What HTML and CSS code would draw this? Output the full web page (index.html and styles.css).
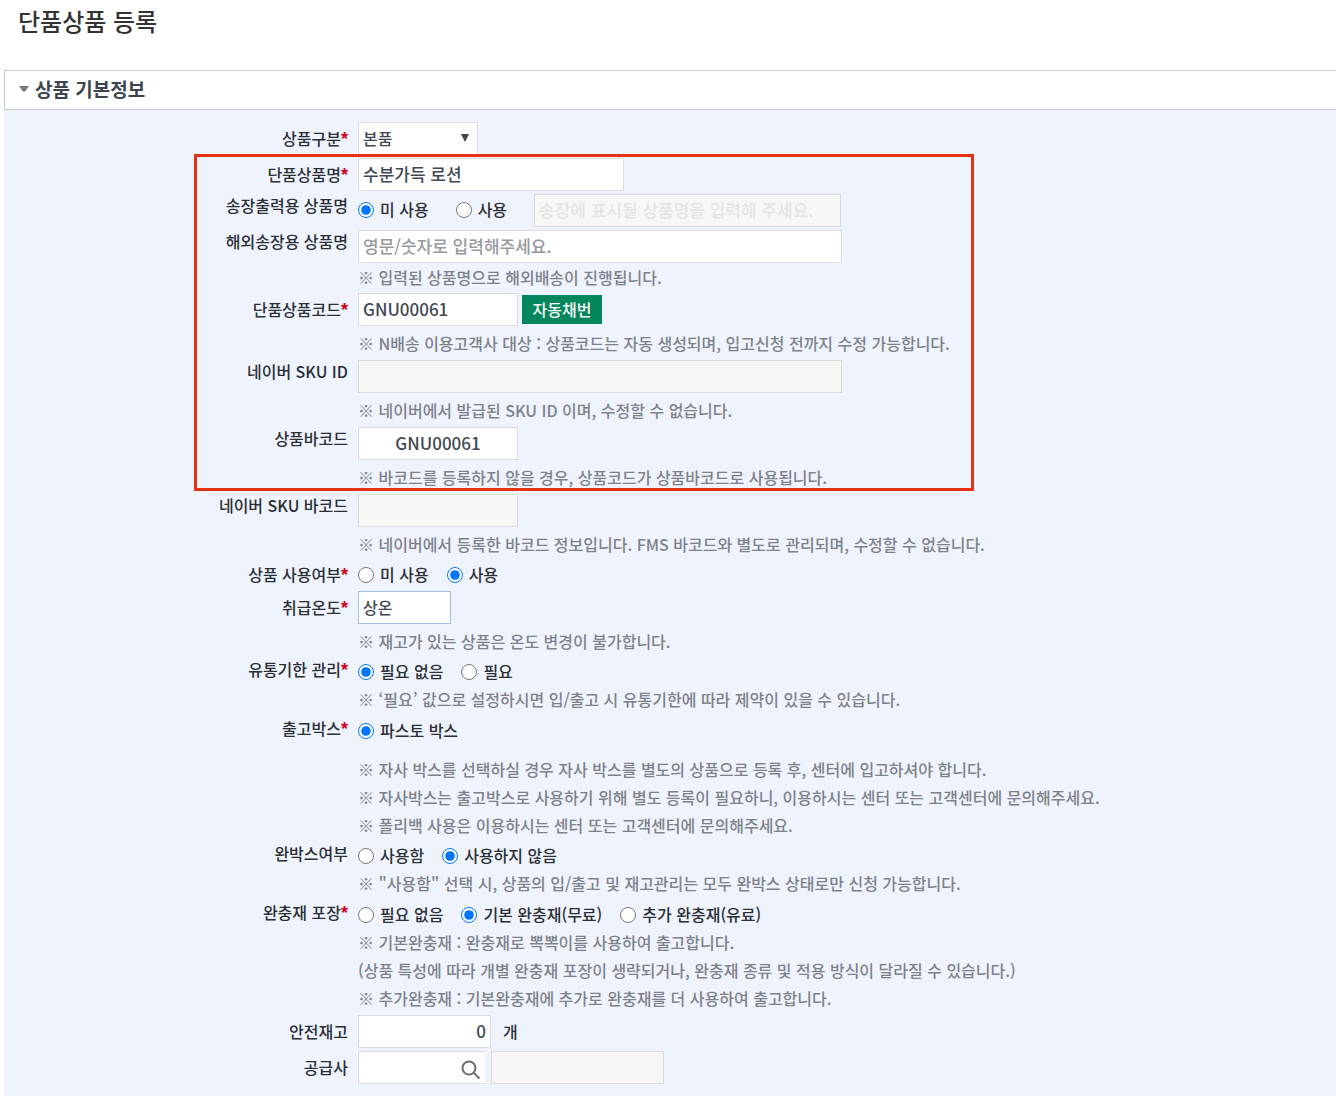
FILE: index.html
```html
<!DOCTYPE html>
<html lang="ko">
<head>
<meta charset="utf-8">
<meta name="viewport" content="width=device-width, initial-scale=1">
<title>단품상품 등록</title>
<link rel="stylesheet" href="styles.css">
</head>
<body>
<h1 class="page-title">단품상품 등록</h1>
<section class="section">
  <h2 class="section-title">
    <svg class="caret" width="10" height="6" viewBox="0 0 10 6" aria-hidden="true"><path d="M0 0H10L6 5.5H4Z"/></svg>
    상품 기본정보
  </h2>
  <form class="panel">
    <div class="row">
      <label class="label label-mid" for="kind">상품구분<span class="req">*</span></label>
      <div class="controls">
        <div class="select-wrap">
          <select class="field w-kind" id="kind"><option>본품</option></select>
          <svg class="arrow" width="8" height="8" viewBox="0 0 8 8" aria-hidden="true"><path d="M0 0H8L4 8Z"/></svg>
        </div>
      </div>
    </div>

    <div class="highlight">
      <div class="row">
        <label class="label label-mid" for="name">단품상품명<span class="req">*</span></label>
        <div class="controls"><input class="field w-name" id="name" type="text" value="수분가득 로션"></div>
      </div>
      <div class="row" role="radiogroup" aria-labelledby="l-invoice">
        <span class="label" id="l-invoice">송장출력용 상품명</span>
        <div class="controls spaced">
          <label class="radio"><input type="radio" name="invoice" checked>미 사용</label>
          <label class="radio"><input type="radio" name="invoice">사용</label>
          <input class="field w-invoice" type="text" aria-label="송장 상품명" placeholder="송장에 표시될 상품명을 입력해 주세요." disabled>
        </div>
      </div>
      <div class="row row-tight">
        <label class="label" for="global">해외송장용 상품명</label>
        <div>
          <div class="controls"><input class="field w-wide" id="global" type="text" placeholder="영문/숫자로 입력해주세요."></div>
          <p class="note">※ 입력된 상품명으로 해외배송이 진행됩니다.</p>
        </div>
      </div>
      <div class="row">
        <label class="label label-mid" for="code">단품상품코드<span class="req">*</span></label>
        <div>
          <div class="controls lead">
            <input class="field w-code" id="code" type="text" value="GNU00061">
            <button class="auto" type="button">자동채번</button>
          </div>
          <p class="note">※ N배송 이용고객사 대상 : 상품코드는 자동 생성되며, 입고신청 전까지 수정 가능합니다.</p>
        </div>
      </div>
      <div class="row">
        <label class="label" for="sku">네이버 SKU ID</label>
        <div>
          <div class="controls lead"><input class="field w-wide" id="sku" type="text" disabled></div>
          <p class="note">※ 네이버에서 발급된 SKU ID 이며, 수정할 수 없습니다.</p>
        </div>
      </div>
      <div class="row">
        <label class="label" for="barcode">상품바코드</label>
        <div>
          <div class="controls lead"><input class="field w-code center" id="barcode" type="text" value="GNU00061"></div>
          <p class="note">※ 바코드를 등록하지 않을 경우, 상품코드가 상품바코드로 사용됩니다.</p>
        </div>
      </div>
    </div>

    <div class="row">
      <label class="label" for="skubar">네이버 SKU 바코드</label>
      <div>
        <div class="controls lead"><input class="field w-code" id="skubar" type="text" disabled></div>
        <p class="note">※ 네이버에서 등록한 바코드 정보입니다. FMS 바코드와 별도로 관리되며, 수정할 수 없습니다.</p>
      </div>
    </div>
    <div class="row" role="radiogroup" aria-labelledby="l-use">
      <span class="label label-line" id="l-use">상품 사용여부<span class="req">*</span></span>
      <div class="options">
        <label class="radio"><input type="radio" name="use">미 사용</label>
        <label class="radio"><input type="radio" name="use" checked>사용</label>
      </div>
    </div>
    <div class="row">
      <label class="label label-mid" for="temp">취급온도<span class="req">*</span></label>
      <div>
        <div class="controls lead"><select class="field w-temp" id="temp"><option>상온</option></select></div>
        <p class="note">※ 재고가 있는 상품은 온도 변경이 불가합니다.</p>
      </div>
    </div>
    <div class="row row-loose" role="radiogroup" aria-labelledby="l-expiry">
      <span class="label" id="l-expiry">유통기한 관리<span class="req">*</span></span>
      <div>
        <div class="options">
          <label class="radio"><input type="radio" name="expiry" checked>필요 없음</label>
          <label class="radio"><input type="radio" name="expiry">필요</label>
        </div>
        <p class="note">※ ‘필요’ 값으로 설정하시면 입/출고 시 유통기한에 따라 제약이 있을 수 있습니다.</p>
      </div>
    </div>
    <div class="row" role="radiogroup" aria-labelledby="l-box">
      <span class="label" id="l-box">출고박스<span class="req">*</span></span>
      <div>
        <div class="options options-apart">
          <label class="radio"><input type="radio" name="box" checked>파스토 박스</label>
        </div>
        <p class="note">※ 자사 박스를 선택하실 경우 자사 박스를 별도의 상품으로 등록 후, 센터에 입고하셔야 합니다.</p>
        <p class="note">※ 자사박스는 출고박스로 사용하기 위해 별도 등록이 필요하니, 이용하시는 센터 또는 고객센터에 문의해주세요.</p>
        <p class="note">※ 폴리백 사용은 이용하시는 센터 또는 고객센터에 문의해주세요.</p>
      </div>
    </div>
    <div class="row row-loose" role="radiogroup" aria-labelledby="l-full">
      <span class="label" id="l-full">완박스여부</span>
      <div>
        <div class="options">
          <label class="radio"><input type="radio" name="full">사용함</label>
          <label class="radio"><input type="radio" name="full" checked>사용하지 않음</label>
        </div>
        <p class="note">※ "사용함" 선택 시, 상품의 입/출고 및 재고관리는 모두 완박스 상태로만 신청 가능합니다.</p>
      </div>
    </div>
    <div class="row" role="radiogroup" aria-labelledby="l-cushion">
      <span class="label" id="l-cushion">완충재 포장<span class="req">*</span></span>
      <div>
        <div class="options">
          <label class="radio"><input type="radio" name="cushion">필요 없음</label>
          <label class="radio"><input type="radio" name="cushion" checked>기본 완충재(무료)</label>
          <label class="radio"><input type="radio" name="cushion">추가 완충재(유료)</label>
        </div>
        <p class="note">※ 기본완충재 : 완충재로 뽁뽁이를 사용하여 출고합니다.</p>
        <p class="note">(상품 특성에 따라 개별 완충재 포장이 생략되거나, 완충재 종류 및 적용 방식이 달라질 수 있습니다.)</p>
        <p class="note">※ 추가완충재 : 기본완충재에 추가로 완충재를 더 사용하여 출고합니다.</p>
      </div>
    </div>
    <div class="row">
      <label class="label label-mid" for="stock">안전재고</label>
      <div class="controls"><input class="field w-stock right" id="stock" type="text" value="0"><span class="unit">개</span></div>
    </div>
    <div class="row">
      <label class="label label-mid" for="supplier">공급사</label>
      <div class="controls supplier">
        <div class="search">
          <input class="search-input" id="supplier" type="text">
          <button class="search-button" type="button" aria-label="공급사 검색">
            <svg width="20" height="20" viewBox="0 0 20 20" aria-hidden="true"><circle cx="8" cy="8" r="6.5"/><path d="M12.6 12.6L18.5 18.5"/></svg>
          </button>
        </div>
        <input class="field w-supplier" type="text" aria-label="공급사명" disabled>
      </div>
    </div>
  </form>
</section>
</body>
</html>
```
FILE: styles.css
```css
*,
*::after {
  box-sizing: border-box;
}

body {
  margin: 0;
  background: #fff;
  color: #2b2f36;
  font: 500 16px/24px "Noto Sans CJK KR", sans-serif;
}

.page-title {
  margin: 0;
  padding: 3px 18px 31px;
  color: #333;
  font-size: 24px;
  font-weight: 500;
  line-height: 36px;
}

.section {
  margin-left: 4px;
}

.section-title {
  display: flex;
  align-items: center;
  gap: 6px;
  height: 40px;
  margin: 0;
  padding: 0 0 2px 14px;
  border: 1px solid #c6c8cb;
  border-right: 0;
  color: #3c4450;
  font-size: 19px;
  font-weight: 700;
  line-height: 36px;
}

.caret {
  fill: #777;
}

.panel {
  padding: 12px 0 12px;
  background: #eff3fd;
}

.row {
  display: grid;
  grid-template-columns: 344px 1fr;
  column-gap: 10px;
  margin-bottom: 3px;
}

.row-tight {
  margin-bottom: 2px;
}

.row-loose {
  margin-bottom: 4px;
}

.row:last-child {
  margin-bottom: 0;
}

.label {
  text-align: right;
  line-height: 22px;
}

.label-line {
  line-height: 26px;
}

.label-mid {
  line-height: 32px;
}

.req {
  color: #d0021b;
  font-family: "Liberation Sans", sans-serif;
  font-size: 18px;
  font-weight: 700;
  line-height: 1;
}

.controls {
  display: flex;
  align-items: center;
  gap: 4px;
  height: 33px;
}

.spaced {
  gap: 27px;
}

.spaced .radio {
  padding-bottom: 3px;
}

.lead {
  margin-bottom: 3px;
}

.options {
  display: flex;
  align-items: center;
  gap: 18px;
  height: 26px;
  margin-bottom: 1px;
}

.options-apart {
  margin-bottom: 12px;
}

.radio {
  display: flex;
  align-items: center;
  gap: 6px;
}

.radio input {
  width: 16px;
  height: 16px;
  margin: 2px 0 0;
}

.note {
  margin: 0;
  color: #7d828a;
  line-height: 28px;
}

.field {
  height: 33px;
  padding: 0 4px 2px;
  border: 1px solid #d9dbdd;
  border-radius: 0;
  background: #fff;
  color: #414852;
  font: inherit;
  font-size: 17px;
}

.field::placeholder {
  color: #96999e;
  opacity: 1;
}

.field:disabled {
  background: #f7f8f5;
}

.field:disabled::placeholder {
  color: #e4e5e3;
}

select.field {
  appearance: none;
  font-size: 16px;
  opacity: 1;
}

.center {
  text-align: center;
}

.right {
  text-align: right;
}

.w-kind {
  width: 120px;
}

.w-name {
  width: 266px;
}

.w-invoice {
  width: 307px;
}

.w-wide {
  width: 484px;
}

.w-code {
  width: 160px;
}

.field.w-temp {
  width: 93px;
  border-color: #a3c0e6;
}

.w-stock {
  width: 133px;
}

.w-supplier {
  width: 173px;
}

.select-wrap {
  position: relative;
  display: flex;
}

.arrow {
  position: absolute;
  top: 12px;
  right: 9px;
  fill: #444;
  pointer-events: none;
}

.auto {
  width: 80px;
  height: 29px;
  padding: 0 0 2px;
  border: 0;
  background: #03865b;
  color: #fff;
  font: inherit;
}

.unit {
  padding: 0 0 2px 8px;
}

.supplier {
  gap: 6px;
}

.search {
  display: flex;
  width: 127px;
  height: 33px;
  border: 1px solid #d9dbdd;
  border-right: 0;
  background: #fff;
}

.search-input {
  flex: 1;
  min-width: 0;
  padding: 0 4px;
  border: 0;
  background: none;
  font: inherit;
}

.search-button {
  padding: 4px 4px 0;
  border: 0;
  background: none;
}

.search-button svg {
  display: block;
  fill: none;
  stroke: #6b6b6b;
  stroke-width: 2;
}

.highlight {
  position: relative;
  margin-bottom: 3px;
}

.highlight::after {
  content: "";
  position: absolute;
  top: -4px;
  bottom: 0;
  left: 190px;
  width: 780px;
  border: 3px solid #e53012;
  pointer-events: none;
}
```
